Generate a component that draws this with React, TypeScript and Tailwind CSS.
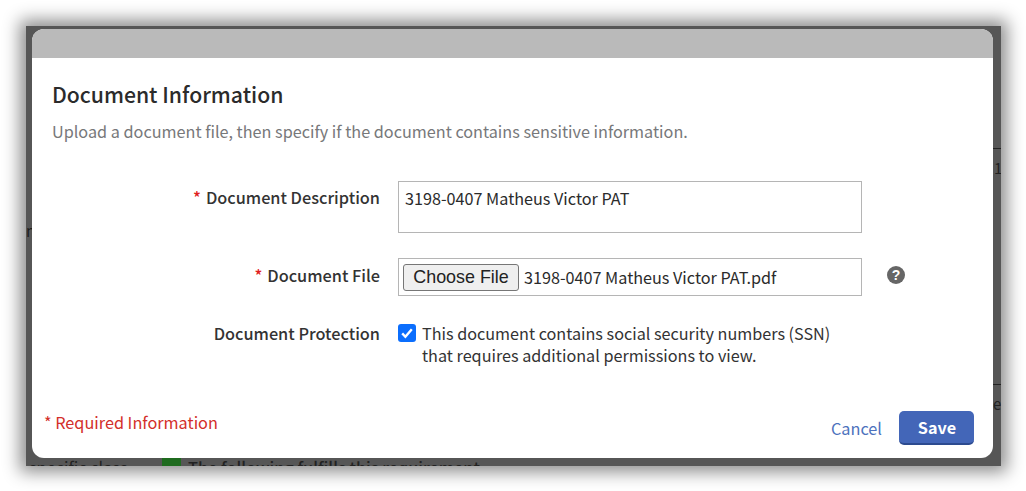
const font = { fontFamily: '"Noto Sans CJK SC", "Noto Sans", sans-serif' };

export default function App() {
  return (
    <div className="w-[1026px] h-[491px] bg-white overflow-hidden pt-[26px] pl-[26px]" style={font}>
      {/* dimmed page behind the modal */}
      <div className="relative w-[975px] h-[440px] bg-[#565656] overflow-hidden shadow-[0_0_16px_6px_rgba(0,0,0,0.45)]">
        <div className="absolute left-0 top-[197px] text-[15px] leading-none text-[#1c1c1c]">ne</div>
        <div className="absolute right-0 top-[122px] w-[8px] h-px bg-[#222]"></div>
        <div className="absolute left-[968px] top-[132px] text-[15px] leading-[20px] text-[#222]">1</div>
        <div className="absolute right-0 top-[358px] w-[8px] h-px bg-[#222]"></div>
        <div className="absolute left-[967px] top-[368px] text-[15px] leading-[20px] text-[#222]">er</div>
        <div className="absolute left-0 bottom-[-11px] flex items-center text-[16.3px] leading-[20px] text-[#222]">
          <span className="w-[136px] pl-[3px]">specific class</span>
          <span className="w-[19px] h-[18px] bg-[#1f6b1f] mr-[7px]"></span>
          <span className="font-medium">The following fulfills this requirement.</span>
        </div>

        <div className="absolute left-[6px] top-[3px] w-[961px] h-[429px] bg-white rounded-[12px] overflow-hidden flex flex-col">
          <div className="h-[29px] bg-[#bababa] shrink-0"></div>

          <div className="flex-1 flex flex-col pl-[20px] pr-[19px]">
            <h1 className="mt-[22px] text-[21.2px] leading-[28px] font-medium text-[#2b2b2b]">Document Information</h1>
            <p className="mt-[12px] text-[16.23px] leading-[22px] text-[#77787a]">
              Upload a document file, then specify if the document contains sensitive information.
            </p>

            <div className="mt-[39px] flex">
              <div className="w-[328px] text-right text-[16.3px] leading-[22px] font-medium text-[#333] pt-[5px]">
                <span className="text-[#e02020] mr-[5px]">*</span>Document Description
              </div>
              <div className="ml-[18px] w-[464px] h-[52px] border border-[#b5b5b5] px-[6px] py-[5px] text-[16.2px] leading-[22px] text-[#2b2b2b]">
                3198-0407 Matheus Victor PAT
              </div>
            </div>

            <div className="mt-[25px] flex items-center">
              <div className="w-[328px] text-right text-[16.3px] leading-[22px] font-medium text-[#333] -mt-[4px]">
                <span className="text-[#e02020] mr-[5px]">*</span>Document File
              </div>
              <div className="ml-[18px] w-[464px] h-[38px] border border-[#b5b5b5] flex items-center pl-[4px] text-[16.2px] text-[#2b2b2b]">
                <span className="w-[116px] h-[27px] flex items-center justify-center bg-[#efefef] border border-[#767676] rounded-[3px] text-[17.9px] text-[#222] mr-[5px]" style={{ fontFamily: '"Liberation Sans", sans-serif' }}>
                  Choose File
                </span>
                3198-0407 Matheus Victor PAT.pdf
              </div>
              <svg className="ml-[24px] -mt-[4px]" width="20" height="20" viewBox="0 0 20 20">
                <circle cx="10" cy="10" r="9" fill="#666" />
                <text x="10" y="15" textAnchor="middle" fontSize="14" fontWeight="700" fill="#fff" fontFamily="Liberation Sans">?</text>
              </svg>
            </div>

            <div className="mt-[24px] flex">
              <div className="w-[328px] text-right text-[16.3px] leading-[22px] font-medium text-[#333] pt-[2px]">
                Document Protection
              </div>
              <div className="ml-[18px] flex">
                <span className="mt-[4px] w-[18px] h-[18px] rounded-[3px] bg-[#0b6efd] flex items-center justify-center shrink-0">
                  <svg width="14" height="14" viewBox="0 0 14 14" fill="none">
                    <path d="M2.2 7.4 5.4 10.8 11.8 3.2" stroke="#fff" strokeWidth="2.4" />
                  </svg>
                </span>
                <p className="ml-[6px] text-[16.2px] leading-[22px] text-[#333] pt-[2px]">
                  This document contains social security numbers (SSN)
                  <br />
                  that requires additional permissions to view.
                </p>
              </div>
            </div>

            <div className="mt-auto mb-[13px] flex items-end justify-between -ml-[8px]">
              <span className="text-[16.25px] leading-[22px] text-[#d32f2a] mb-[12px]">* Required Information</span>
              <div className="flex items-center">
                <span className="text-[16.3px] text-[#4d72bd] mr-[17px]">Cancel</span>
                <span className="w-[75px] h-[34px] flex items-center justify-center bg-[#4366b8] rounded-[5px] border-b-2 border-[#2c4a8f] text-[16.2px] font-bold text-white pl-px">
                  Save
                </span>
              </div>
            </div>
          </div>
        </div>
      </div>
    </div>
  );
}
